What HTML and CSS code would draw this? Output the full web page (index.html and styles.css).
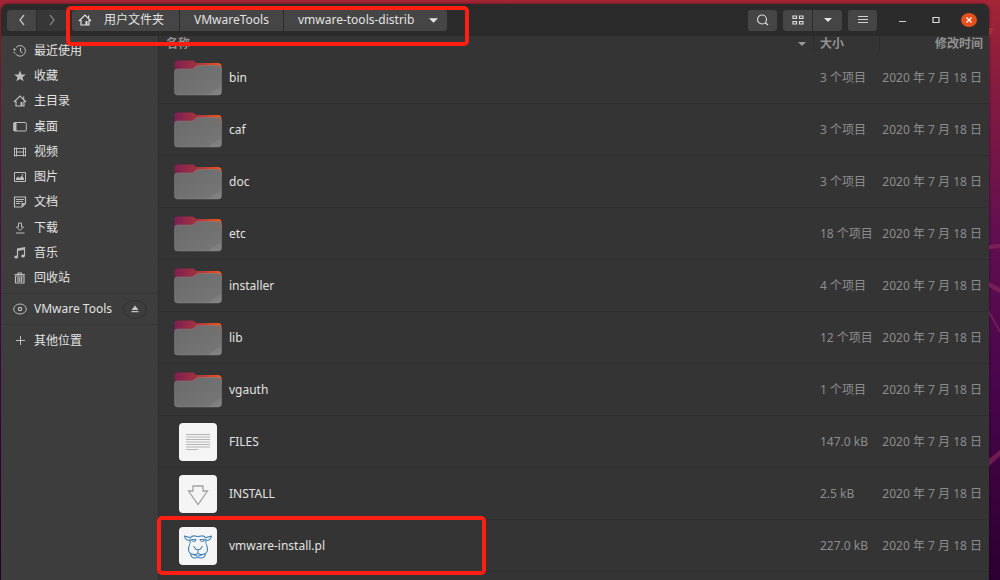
FILE: index.html
```html
<!DOCTYPE html>
<html lang="zh-CN">
<head>
<meta charset="utf-8">
<title>vmware-tools-distrib</title>
<link rel="stylesheet" href="styles.css">
</head>
<body>
<svg class="defs" aria-hidden="true">
  <defs>
    <linearGradient id="tab" x1="0" x2="1" y1="0" y2="0"><stop offset="0" stop-color="#7c1f55"/><stop offset=".42" stop-color="#a0303f"/><stop offset="1" stop-color="#f4561e"/></linearGradient>
    <linearGradient id="front" x1="0" x2="1" y1="0" y2="1"><stop offset="0" stop-color="#6a6a6a"/><stop offset=".84" stop-color="#757575"/><stop offset=".85" stop-color="#7e7e7e"/><stop offset="1" stop-color="#848484"/></linearGradient>
    <symbol id="folder" viewBox="0 0 48 36">
      <path fill="url(#tab)" d="M.5 12V3.500q0-3 3-3h14q2 0 3 1L22 3H44q3.500 0 3.500 3.500V12z"/>
      <path fill="url(#front)" d="M.5 12q0-3 3-3h14q2 0 3.500-2 1.500-1.500 3.500-1.500H44q3.500.3 3.500 3.500v23q0 3-3 3h-41q-3 0-3-3z"/>
      <path fill="none" stroke="#858585" stroke-width=".5" d="M.5 12q0-3 3-3h14q2 0 3.500-2 1.500-1.500 3.500-1.500H44q3.500.3 3.500 3.500v23q0 3-3 3h-41q-3 0-3-3z"/>
    </symbol>
    <symbol id="home" viewBox="0 0 14 14"><path d="M1 8l6-6 6 6M3 7v5h8V7" fill="none" stroke="currentColor" stroke-width="1.2"/><path d="M7.500 8h2v4h-2z" fill="currentColor"/><path d="M10 2.500h1.200v3L10 4.500z" fill="currentColor"/></symbol>
  </defs>
</svg>
<svg class="rays" viewBox="0 0 11 580" preserveAspectRatio="none" aria-hidden="true">
  <path d="M0 245l11-1v4l-11 1zM0 282l11 6v5l-11-6zM0 310l11 20v3L0 314zM0 459l11-9v6L0 466z" fill="#8c2a5c" opacity=".65"/>
  <path d="M0 28l5 0-5 10z" fill="#c03a3c" opacity=".5"/>
</svg>

<div class="window">
  <header class="titlebar">
    <div class="group">
      <button class="btn" aria-label="后退"><svg width="8" height="12" viewBox="0 0 8 12"><path d="M6 1L2 6l4 5" fill="none" stroke="#c4c4c4" stroke-width="1.3"/></svg></button>
      <button class="btn dim" aria-label="前进"><svg width="8" height="12" viewBox="0 0 8 12"><path d="M2 1l4 5-4 5" fill="none" stroke="#7c7c7c" stroke-width="1.3"/></svg></button>
    </div>
    <nav class="group path">
      <button class="btn crumb home"><svg width="14" height="14"><use href="#home"/></svg>用户文件夹</button>
      <button class="btn crumb">VMwareTools</button>
      <button class="btn crumb current">vmware-tools-distrib<svg width="9" height="5" viewBox="0 0 8 4"><path d="M0 0h8L4 4z" fill="#e6e6e6"/></svg></button>
    </nav>
    <div class="tools">
      <button class="btn" aria-label="搜索"><svg width="14" height="12" viewBox="0 0 14 12"><circle cx="6" cy="5.500" r="4.500" fill="none" stroke="#d6d6d6" stroke-width="1.2"/><path d="M9 8.500l3 2.500" stroke="#d6d6d6" stroke-width="1.600"/></svg></button>
      <div class="group">
        <button class="btn" aria-label="图标视图"><svg width="12" height="10" viewBox="0 0 12 10"><path d="M1 1h3.500v2.500H1zM7.500 1H11v2.500H7.500zM1 6.500h3.500V9H1zM7.500 6.500H11V9H7.500z" fill="none" stroke="#dcdcdc" stroke-width="1.200"/></svg></button>
        <button class="btn" aria-label="视图选项"><svg width="8" height="4" viewBox="0 0 8 4"><path d="M0 0h8L4 4z" fill="#e6e6e6"/></svg></button>
      </div>
      <button class="btn" aria-label="菜单"><svg width="10" height="8" viewBox="0 0 10 8"><path d="M0 .5h10M0 3.500h10M0 6.500h10" stroke="#cfcfcf"/></svg></button>
    </div>
    <div class="controls">
      <button aria-label="最小化"><svg width="8" height="8" viewBox="0 0 8 8"><path d="M0 5.500h7" stroke="#cfcfcf"/></svg></button>
      <button aria-label="最大化"><svg width="8" height="8" viewBox="0 0 8 8"><path d="M1 1.500h6v5H1z" fill="none" stroke="#dcdcdc" stroke-width="1.200"/></svg></button>
      <button class="close" aria-label="关闭"><svg width="8" height="8" viewBox="0 0 8 8"><path d="M1.500 1.500l5 5m0-5l-5 5" stroke="#fff" stroke-width="1.200"/></svg></button>
    </div>
  </header>

  <div class="content">
    <aside class="sidebar">
      <nav class="places">
        <a href="#"><svg viewBox="0 0 14 14"><path d="M3 3.500a5.300 5.300 0 1 1-.5 6M7.500 4v3.500L9.500 9" fill="none" stroke="currentColor"/><path d="M.5 4.500h2v2h-2z" fill="currentColor"/><circle cx="1.300" cy="8.500" r=".7" fill="currentColor"/></svg>最近使用</a>
        <a href="#"><svg viewBox="0 0 14 14"><path d="M7 1.500l1.600 3.900 4.200.2-3.300 2.600 1.100 4L7 9.900l-3.600 2.300 1.100-4L1.200 5.600l4.200-.2z" fill="currentColor"/></svg>收藏</a>
        <a href="#"><svg><use href="#home"/></svg>主目录</a>
        <a href="#"><svg viewBox="0 0 14 14"><rect x=".8" y="2.500" width="12.500" height="8.500" rx="1" fill="none" stroke="currentColor"/><path d="M.5 2.500h3V11h-3z" fill="currentColor"/></svg>桌面</a>
        <a href="#"><svg viewBox="0 0 14 14"><path d="M1.500 2.500v9M12.500 2.500v9M3.500 2.500v9M10.500 2.500v9M1.500 3.500h11M1.500 10.500h11M3.500 7h7" fill="none" stroke="currentColor"/></svg>视频</a>
        <a href="#"><svg viewBox="0 0 14 14"><path d="M1.500 2.500h11v9h-11z" fill="none" stroke="currentColor"/><path d="M3 10V8.500l2-2 1.500 1.500L9 5.500l2 3V10z" fill="currentColor"/><circle cx="9.500" cy="4.800" r=".8" fill="currentColor"/></svg>图片</a>
        <a href="#"><svg viewBox="0 0 14 14"><path d="M1.500 2h11v6.500l-3.500 3.500H1.500z" fill="none" stroke="currentColor" stroke-width="1.200"/><path d="M3 4.500h8M3 6.500h7M3 8.500h4" stroke="currentColor"/><path d="M8.500 8H12l-3.500 4z" fill="currentColor"/></svg>文档</a>
        <a href="#"><svg viewBox="0 0 14 14"><path d="M5.500 2h3v4h2L7 9.500 3.500 6h2zM3 12h8.500" fill="none" stroke="currentColor"/></svg>下载</a>
        <a href="#"><svg viewBox="0 0 14 14"><path d="M4.500 11V3l7-1.300V10" fill="none" stroke="currentColor" stroke-width="1.200"/><path d="M4.500 3l7-1.300v2l-7 1.300z" fill="currentColor"/><ellipse cx="3.200" cy="11" rx="1.900" ry="1.500" fill="currentColor"/><ellipse cx="10" cy="10" rx="1.900" ry="1.500" fill="currentColor"/></svg>音乐</a>
        <a href="#"><svg viewBox="0 0 14 14"><path d="M1.500 3.500h10.500M5 3V2h3.500v1M2.500 5h8.500v7h-8.500zM5 6v5M6.800 6v5M8.600 6v5" fill="none" stroke="currentColor" stroke-width="1.200"/></svg>回收站</a>
      </nav>
      <div class="places device">
        <a href="#"><svg viewBox="0 0 14 14"><ellipse cx="7" cy="7" rx="6.300" ry="5" fill="none" stroke="currentColor"/><circle cx="7" cy="7" r="1.700" fill="none" stroke="currentColor" stroke-width="1.200"/></svg>VMware Tools</a>
        <button class="eject" aria-label="弹出"><svg width="8" height="8" viewBox="0 0 8 8"><path d="M4 .5L7.500 5h-7zM.5 6h7v1.300h-7z" fill="#c4c4c4"/></svg></button>
      </div>
      <div class="places other">
        <a href="#"><svg viewBox="0 0 14 14"><path d="M7.500 2v9M3 6.500h9" stroke="currentColor"/></svg>其他位置</a>
      </div>
    </aside>

    <main class="files">
      <table>
        <thead>
          <tr><th class="name"><span class="sort">名称<svg width="8" height="4" viewBox="0 0 8 4"><path d="M0 0h8L4 4z" fill="#999"/></svg></span></th><th class="size">大小</th><th class="date">修改时间</th></tr>
        </thead>
        <tbody>
          <tr><td><div class="file"><svg class="folder"><use href="#folder"/></svg>bin</div></td><td class="size">3 个项目</td><td class="date">2020 年 7 月 18 日</td></tr>
          <tr><td><div class="file"><svg class="folder"><use href="#folder"/></svg>caf</div></td><td class="size">3 个项目</td><td class="date">2020 年 7 月 18 日</td></tr>
          <tr><td><div class="file"><svg class="folder"><use href="#folder"/></svg>doc</div></td><td class="size">3 个项目</td><td class="date">2020 年 7 月 18 日</td></tr>
          <tr><td><div class="file"><svg class="folder"><use href="#folder"/></svg>etc</div></td><td class="size">18 个项目</td><td class="date">2020 年 7 月 18 日</td></tr>
          <tr><td><div class="file"><svg class="folder"><use href="#folder"/></svg>installer</div></td><td class="size">4 个项目</td><td class="date">2020 年 7 月 18 日</td></tr>
          <tr><td><div class="file"><svg class="folder"><use href="#folder"/></svg>lib</div></td><td class="size">12 个项目</td><td class="date">2020 年 7 月 18 日</td></tr>
          <tr><td><div class="file"><svg class="folder"><use href="#folder"/></svg>vgauth</div></td><td class="size">1 个项目</td><td class="date">2020 年 7 月 18 日</td></tr>
          <tr><td><div class="file"><svg class="doc" viewBox="0 0 38 38"><rect width="38" height="38" rx="4" fill="#f5f5f5"/><path d="M7 11.500h24M7 14h24M7 16.500h24M7 19h24M7 21.500h24M7 24h24M7 26.500h12" stroke="#b4b4b4"/></svg>FILES</div></td><td class="size">147.0 kB</td><td class="date">2020 年 7 月 18 日</td></tr>
          <tr><td><div class="file"><svg class="doc" viewBox="0 0 38 38"><rect width="38" height="38" rx="4" fill="#f5f5f5"/><path d="M14 11h10v5h4.500L19 29.500 9.500 16H14z" fill="none" stroke="#a2a2a2" stroke-width="1.300"/></svg>INSTALL</div></td><td class="size">2.5 kB</td><td class="date">2020 年 7 月 18 日</td></tr>
          <tr><td class="marked"><div class="file"><svg class="doc" viewBox="0 0 38 38"><rect width="38" height="38" rx="4" fill="#f5f5f5"/><g fill="none" stroke="#4584b8" stroke-width="1.100" stroke-linejoin="round"><path d="M11.500 10.500Q8 10 5.500 9q.5 4.500 5.500 4.500M26.500 10.500Q30 10 32.500 9q-.5 4.500-5.500 4.500"/><path d="M11 11q2-2.500 5-2 3 1 6 0 3-.5 5 2M11 11.500q1 4-1 8-1.500 4.500 1.500 7 .5 4.500 4.500 4.500 3-1 6 0 4 0 4.500-4.500 3-2.500 1.500-7-2-4-1-8"/><path d="M12.500 12.500h4.500q-.5 2-2.300 2t-2.200-2zM21 12.500h4.500q-.5 2-2.300 2t-2.200-2zM14.500 19l2.500 3.500h4l2.500-3.500M19 22.500V26M11.500 26.500q5 2.500 7.500-.5 2.500 3 7.500.5M15 28q4 2 8 0"/></g></svg>vmware-install.pl</div></td><td class="size">227.0 kB</td><td class="date">2020 年 7 月 18 日</td></tr>
        </tbody>
      </table>
    </main>
  </div>
</div>
</body>
</html>
```
FILE: styles.css
```css
*, ::after { box-sizing: border-box; }

body {
  margin: 0;
  min-height: 100vh;
  padding: 4px 11px 0 1px;
  overflow: hidden;
  background: linear-gradient(#a32536, #851b40 15%, #620f50 40%, #4a064c 65%, #2c0030);
  font: 12px/16px "Noto Sans", "Noto Sans CJK SC", sans-serif;
  color: #e2e2e2;
}

button {
  font: inherit;
  color: inherit;
  border: 0;
  padding: 0;
  background: none;
  display: flex;
  align-items: center;
  justify-content: center;
}

a { color: inherit; text-decoration: none; }
svg { flex: none; display: block; }
.defs { position: absolute; width: 0; height: 0; }
.rays { position: absolute; top: 0; right: 0; width: 11px; height: 100%; }

.window {
  display: flex;
  flex-direction: column;
  min-height: calc(100vh - 4px);
  background: #343434;
  border-radius: 7px 7px 0 0;
  box-shadow: 0 0 3px #0008;
}

.titlebar {
  display: flex;
  align-items: center;
  height: 32px;
  padding: 0 12px 0 6px;
  background: #2b2b2b;
  border-radius: 7px 7px 0 0;
}

.group { display: flex; gap: 1px; }
.btn {
  width: 29px;
  height: 21px;
  background: #454545;
  border-radius: 3px;
}
.group .btn { border-radius: 0; }
.group .btn:first-child { border-radius: 3px 0 0 3px; }
.group .btn:last-child { border-radius: 0 3px 3px 0; }
.btn.dim { background: #373737; }

.path { position: relative; margin-left: 6px; }
.path::after {
  content: "";
  position: absolute;
  z-index: 1;
  inset: -4px -22px -15px -6px;
  border: 4px solid #fd1f12;
  border-radius: 5px;
  pointer-events: none;
}
.path .crumb { width: auto; padding: 0 14px; }
.path .home { gap: 12px; padding: 0 15px 0 6px; }
.path .current { gap: 15px; padding: 0 9px 0 14px; }

.tools { display: flex; gap: 6px; margin-left: auto; }
.controls { display: flex; align-items: center; gap: 17px; margin-left: 18px; }
.controls button { width: 16px; height: 16px; }
.controls .close {
  background: #e5501d;
  border-radius: 50%;
  height: 14px;
}

.content { display: flex; flex: 1; }
.sidebar {
  flex: none;
  width: 158px;
  padding-top: 2px;
  background: #3d3d3d;
  border-right: 1px solid #2d2d2d;
}
.places {
  display: grid;
  grid-auto-rows: 1fr;
  min-height: 253px;
  padding-left: 12px;
}
.places a { display: flex; align-items: center; gap: 7px; }
.places svg { width: 14px; height: 14px; color: #bdbdbd; }
.places.device {
  display: flex;
  align-items: center;
  justify-content: space-between;
  min-height: 32px;
  margin-top: 2px;
  padding-right: 11px;
  border-top: 1px solid #363636;
  border-bottom: 1px solid #363636;
}
.places.other { min-height: 32px; }
.eject {
  width: 24px;
  height: 19px;
  border: 1px solid #323232;
  border-radius: 50%;
}
.places .eject svg { width: 8px; height: 8px; }

.files { flex: 1; }
table { width: 100%; border-spacing: 0; table-layout: fixed; }
th {
  height: 16px;
  padding: 0 7px;
  text-align: left;
  font-weight: 700;
  color: #929292;
  border-right: 1px solid #2d2d2d;
}
th:last-child { border-right: 0; }
.sort { display: flex; align-items: center; justify-content: space-between; }
th.size { width: 66px; padding: 0 6px; }
th.date { width: 109px; padding: 0 6px; }
.date { text-align: right; }
td {
  height: 52px;
  padding: 0 7px;
  border-bottom: 1px solid #2e2e2e;
  white-space: nowrap;
}
td.size { color: #8d8d8d; padding: 0 0 0 6px; }
td.date { color: #8d8d8d; padding: 0 7px 0 0; }
.file { display: flex; align-items: center; gap: 7px; padding-left: 8px; }
.file .folder { width: 48px; height: 36px; }
.file .doc { width: 38px; height: 38px; margin: 0 5px; }
.marked { position: relative; }
.marked::after {
  content: "";
  position: absolute;
  inset: -4px auto -4px -2px;
  width: 329px;
  border: 4px solid #fd1f12;
  border-radius: 5px;
  pointer-events: none;
}
```
